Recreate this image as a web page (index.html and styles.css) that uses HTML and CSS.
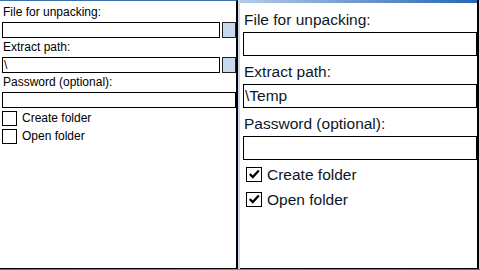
FILE: index.html
```html
<!DOCTYPE html>
<html lang="en">
<head>
    <meta charset="UTF-8">
    <meta name="viewport" content="width=device-width, initial-scale=1.0">
    <title>Unpack archive</title>
    <link rel="stylesheet" href="styles.css">
</head>
<body>
    <div class="screen">
        <div class="pane pane-small">
            <div class="caption">File for unpacking:</div>
            <div class="field-row">
                <div class="field"></div>
                <div class="browse"></div>
            </div>
            <div class="caption">Extract path:</div>
            <div class="field-row">
                <div class="field">\</div>
                <div class="browse"></div>
            </div>
            <div class="caption">Password (optional):</div>
            <div class="field-row">
                <div class="field"></div>
            </div>
            <div class="checks">
                <div class="check"><span class="box"></span>Create folder</div>
                <div class="check"><span class="box"></span>Open folder</div>
            </div>
        </div>

        <div class="pane pane-large">
            <div class="caption">File for unpacking:</div>
            <div class="field"></div>
            <div class="caption">Extract path:</div>
            <div class="field">\Temp</div>
            <div class="caption">Password (optional):</div>
            <div class="field"></div>
            <div class="checks">
                <div class="check">
                    <span class="box"><svg viewBox="0 0 15 15" width="13" height="13"><path d="M2 7 L5.5 10.5 L12.5 3" fill="none" stroke="#000" stroke-width="2.6"/></svg></span>
                    Create folder
                </div>
                <div class="check">
                    <span class="box"><svg viewBox="0 0 15 15" width="13" height="13"><path d="M2 7 L5.5 10.5 L12.5 3" fill="none" stroke="#000" stroke-width="2.6"/></svg></span>
                    Open folder
                </div>
            </div>
        </div>
    </div>
    <div class="taskbar"></div>
</body>
</html>
```

FILE: styles.css
```css
body {
    margin: 0;
    padding: 0;
    width: 480px;
    height: 270px;
    overflow: hidden;
    background-color: #cdd7e6;
    font-family: "Liberation Sans", Arial, sans-serif;
}
.screen {
    display: flex;
    gap: 2px;
    height: 269px;
}
.pane {
    box-sizing: border-box;
    height: 269px;
    background: #fff;
    border-right: 2px solid #000;
    border-bottom: 1px solid #000;
    display: flex;
    flex-direction: column;
}

/* left: small font version */
.pane-small {
    width: 238px;
    padding: 2px 0 0 2px;
    border-top: 1px solid #3a6fb0;
    font-size: 12px;
    color: #000;
}
.pane-small .caption {
    height: 19px;
    line-height: 19px;
    padding-left: 1px;
}
.pane-small .field-row {
    display: flex;
    gap: 2px;
}
.pane-small .field {
    flex: 1;
    box-sizing: border-box;
    height: 16px;
    line-height: 14px;
    border: 1px solid #000;
    padding-left: 1px;
}
.pane-small .browse {
    box-sizing: border-box;
    width: 14px;
    height: 16px;
    background: #c8d8ee;
    border: 1px solid #222;
}
.pane-small .checks {
    margin-top: 3px;
}
.pane-small .check {
    display: flex;
    align-items: flex-start;
    height: 18px;
    line-height: 15px;
}
.pane-small .box {
    box-sizing: border-box;
    width: 15px;
    height: 15px;
    border: 1px solid #000;
    margin-right: 5px;
}

/* right: large font version */
.pane-large {
    width: 239px;
    padding: 4px 0 0 3px;
    background: linear-gradient(to right, #b4cce8, #2766b4) top / 100% 3px no-repeat, #fff;
    font-size: 15.5px;
    color: #0e1626;
}
.pane-large .caption {
    box-sizing: border-box;
    height: 28px;
    padding-top: 3px;
    line-height: 25px;
    padding-left: 1px;
}
.pane-large .field {
    box-sizing: border-box;
    height: 24px;
    line-height: 22px;
    border: 1px solid #000;
    padding-left: 1px;
}
.pane-large .checks {
    margin-top: 7px;
    padding-left: 3px;
}
.pane-large .check {
    display: flex;
    align-items: flex-start;
    height: 25px;
    line-height: 15px;
}
.pane-large .box {
    box-sizing: border-box;
    width: 16px;
    height: 15px;
    border: 1px solid #000;
    margin-right: 5px;
    display: flex;
    align-items: center;
    justify-content: center;
}
.taskbar {
    height: 1px;
    background: linear-gradient(to right, #3a78c2, #5a92d0, #3a78c2);
}
```
